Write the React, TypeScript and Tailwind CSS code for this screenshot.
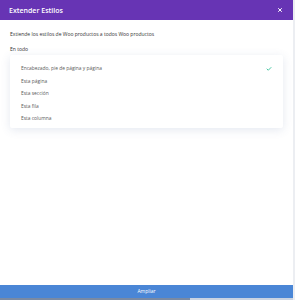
import { Check, X } from 'lucide-react'

const OPTIONS = [
  'Encabezado, pie de página y página',
  'Esta página',
  'Esta sección',
  'Esta fila',
  'Esta columna',
]

export default function App() {
  return (
    <div className="flex h-[300px] w-[295px] bg-[#eceef2] font-['Open_Sans',sans-serif]">
      <div className="flex h-full w-[293px] flex-col bg-white">
        <div className="flex h-[20px] shrink-0 items-center justify-between bg-[#6734b4] pl-[9px] pr-[10px]">
          <span className="text-[7px] font-semibold leading-none text-white">Extender Estilos</span>
          <X className="h-[6px] w-[6px] text-white" strokeWidth={4} />
        </div>

        <div className="flex-1 px-[10px] pt-[12px]">
          <p className="text-[5px] leading-[5px] text-[#333]">
            Extiende los estilos de Woo productos a todos Woo productos
          </p>
          <p className="mt-[10px] text-[5px] leading-[5px] text-[#333]">En todo</p>

          <div className="mt-[3px] h-[73px] rounded-[2px] bg-white pt-[7.5px] pl-[11px] pr-[11px] shadow-[0_2px_10px_rgba(90,110,160,0.16)]">
            {OPTIONS.map((option, i) => (
              <div key={option} className="flex h-[12.5px] items-center justify-between">
                <span className="text-[4.9px] leading-none text-[#5a5a5a]">{option}</span>
                {i === 0 ? <Check className="h-[6px] w-[6px] text-[#2fbf96]" strokeWidth={3.5} /> : null}
              </div>
            ))}
          </div>
        </div>

        <div className="flex h-[13px] shrink-0 items-center justify-center bg-[#4a86d6]">
          <span className="text-[5px] leading-none text-white">Ampliar</span>
        </div>
        <div className="flex h-[2px] shrink-0">
          <div className="w-[190px] bg-[#7a8aa3]" />
          <div className="flex-1 bg-[#c9d3e2]" />
        </div>
      </div>
    </div>
  )
}
